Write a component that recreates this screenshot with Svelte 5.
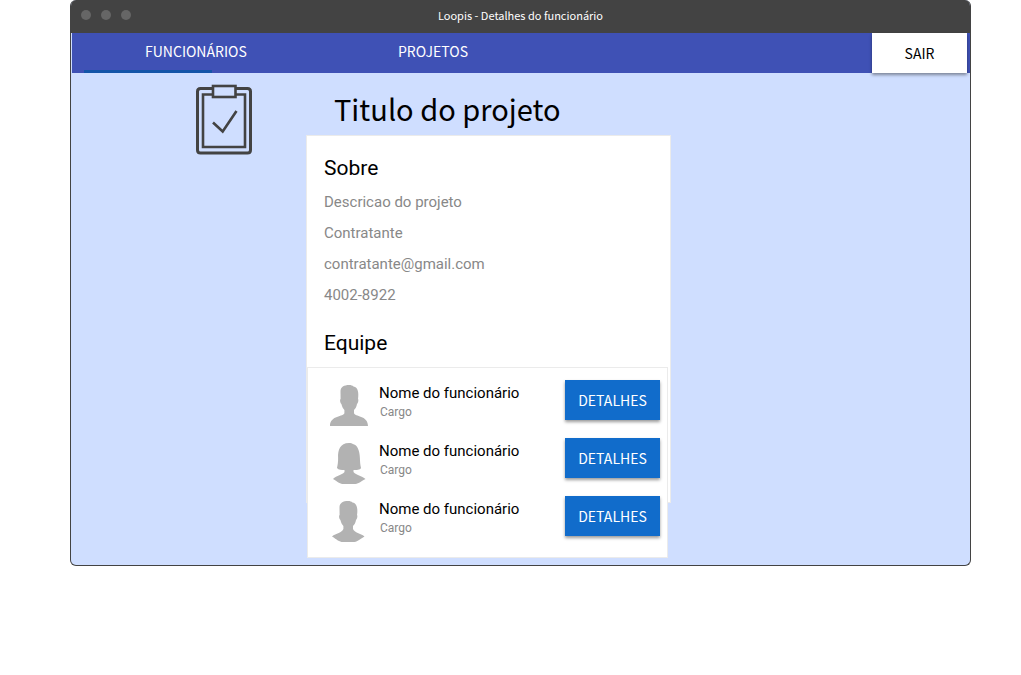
<script>
  const contact = ['Descricao do projeto', 'Contratante', 'contratante@gmail.com', '4002-8922'];
  const team = [
    { name: 'Nome do funcionário', role: 'Cargo', avatar: 'wide' },
    { name: 'Nome do funcionário', role: 'Cargo', avatar: 'long' },
    { name: 'Nome do funcionário', role: 'Cargo', avatar: 'short' }
  ];
  const head = 'M19.2 0C14 0 10.4 2 10.5 6.5L10.6 14C9.7 14.4 10 18 11.4 19C12 21.5 13 23.5 14.4 25';
  const avatars = {
    wide: head + 'V28C14 32 0 30 0 41H38C38 30 24.5 32 24 28V25C25.6 23.5 26.6 21.5 27 19C28.4 18 28.7 14.4 28 14C29 8 28 2 23.5 1.5C22.5 .5 21 0 19.2 0Z',
    long: 'M19 0C10 0 7.8 7 8.1 15C8.2 19 7.6 22 7 25C8.5 27 11.5 27 14.5 27V29C12.5 32 6.5 32.5 3 36C8 39 10 41 14 41H24C28 41 30 39 35.5 36C31 32.5 25.5 32 23.5 29V27C26.5 27 30 27 31 25C30.3 22 30 19 29.9 15C29.8 7 27 2 23.5 1.2C22 .3 21 0 19 0Z',
    short: 'M18.2 0C13 0 9.4 2 9.5 6.5L9.6 14C8.7 14.4 9 18 10.4 19C11 21.5 12 23.5 13.4 25V28C12 32 6 32 2 35.5C7 38.5 9 41 13 41H23C27 41 29 39 34.5 35.5C30.5 32 24.5 32 23 28V25C24.6 23.5 25.6 21.5 26 19C27.4 18 27.7 14.4 27 14C28 8 27 2 22.5 1.5C21.5 .5 20 0 18.2 0Z'
  };
</script>

<div class="page">
  <div class="window">
    <header class="titlebar">
      <div class="dots"><span></span><span></span><span></span></div>
      <div class="caption">Loopis - Detalhes do funcionário</div>
    </header>
    <nav>
      <a class="current" href="#funcionarios">FUNCIONÁRIOS</a>
      <a href="#projetos">PROJETOS</a>
      <button class="exit" type="button">SAIR</button>
    </nav>
    <main>
      <svg class="clipboard" width="56" height="71" viewBox="0 0 56 71" fill="none" stroke="#434343" stroke-width="3" aria-hidden="true">
        <path d="M16 4.5H4.5Q1.5 4.5 1.5 7.500V66Q1.500 69 4.500 69H51.500Q54.500 69 54.500 66V7.500Q54.500 4.500 51.500 4.500H40" />
        <path d="M16 10.500H7V63H49V10.500H40" stroke-width="2.600" />
        <rect x="17" y="2" width="22.500" height="11" stroke-width="2.600" />
        <path d="M17 38.500L26.700 47.500L40.500 27" stroke-width="2.600" />
      </svg>
      <div class="content">
        <h1>Titulo do projeto</h1>
        <section class="about">
          <h2>Sobre</h2>
          {#each contact as line}
            <p>{line}</p>
          {/each}
          <h2 class="team-title">Equipe</h2>
        </section>
        <ul class="team">
          {#each team as member}
            <li>
              <svg class="avatar" width="38" height="41" viewBox="0 0 38 41" fill="#b2b2b2" aria-hidden="true"><path d={avatars[member.avatar]} /></svg>
              <div class="person">
                <strong>{member.name}</strong>
                <span>{member.role}</span>
              </div>
              <button type="button">DETALHES</button>
            </li>
          {/each}
        </ul>
      </div>
    </main>
  </div>
</div>

<style>
  :global(body) { margin: 0; background: #fff; }
  * { box-sizing: border-box; }
  .page { padding: 0 50px 0 70px; }
  .window {
    border: 1px solid #434343;
    border-top: 0;
    border-radius: 6px;
    background: #cfdeff;
    overflow: hidden;
    font-family: Roboto, sans-serif;
  }
  .titlebar {
    display: grid;
    grid-template-columns: 1fr auto 1fr;
    align-items: center;
    height: 33px;
    padding: 0 10px;
    background: #434343;
  }
  .dots { display: flex; gap: 10px; padding-bottom: 3px; }
  .dots span { width: 10px; height: 10px; border-radius: 50%; background: #666; }
  .caption { color: #fff; padding-bottom: 2px; font: 11px/31px "Noto Sans CJK SC", sans-serif; }
  nav {
    display: flex;
    height: 40px;
    margin-left: 1px;
    padding: 0 3px 0 12px;
    background: #3f51b5;
  }
  nav a {
    width: 238px;
    padding-left: 61px;
    color: #fff;
    font: 14px/36px "Noto Sans CJK SC", sans-serif;
    text-decoration: none;
  }
  nav a + a { padding-left: 76px; }
  .current { background: linear-gradient(#1455a8, #1455a8) 0 100% / 128px 3px no-repeat; }
  button {
    width: 95px;
    height: 40px;
    padding: 0;
    border: 0;
    background: #116ccb;
    box-shadow: 0 2px 3px rgb(0 0 0 / 40%);
    color: #fff;
    font: 14px/40px "Noto Sans CJK SC", sans-serif;
  }
  .exit { margin-left: auto; background: #fff; color: #000; }
  main { display: flex; align-items: flex-start; padding: 0 16px 7px 125px; }
  .clipboard { flex: none; margin: 11px 54px 0 0; }
  .content { flex: 0 1 365px; }
  h1 { margin: 0; padding: 8px 0 0 28px; color: #000; font: 29px/54px "Noto Sans CJK SC", sans-serif; }
  .about { padding: 16px 17px 143px; border: 1px solid #ebebeb; background: #fff; }
  h2 { margin: 0 0 3px; font: 400 21px/32px Roboto, sans-serif; color: #000; }
  h2.team-title { margin: 16px 0 0; }
  p { margin: 0; color: #888; font-size: 15px; line-height: 31px; }
  .team {
    position: relative;
    display: flex;
    flex-direction: column;
    gap: 12px;
    margin: -136px 3px 0 1px;
    padding: 12px 7px 15px 22px;
    border: 1px solid #ebebeb;
    background: #fff;
    list-style: none;
  }
  li { display: flex; align-items: flex-start; height: 46px; }
  .avatar { flex: none; margin-top: 5px; }
  .person { display: flex; flex-direction: column; flex: 1; padding: 4px 0 0 11px; }
  strong { color: #000; font-size: 15px; font-weight: 400; line-height: 18px; }
  .person span { padding-left: 1px; color: #888; font-size: 12px; line-height: 20px; }
</style>
